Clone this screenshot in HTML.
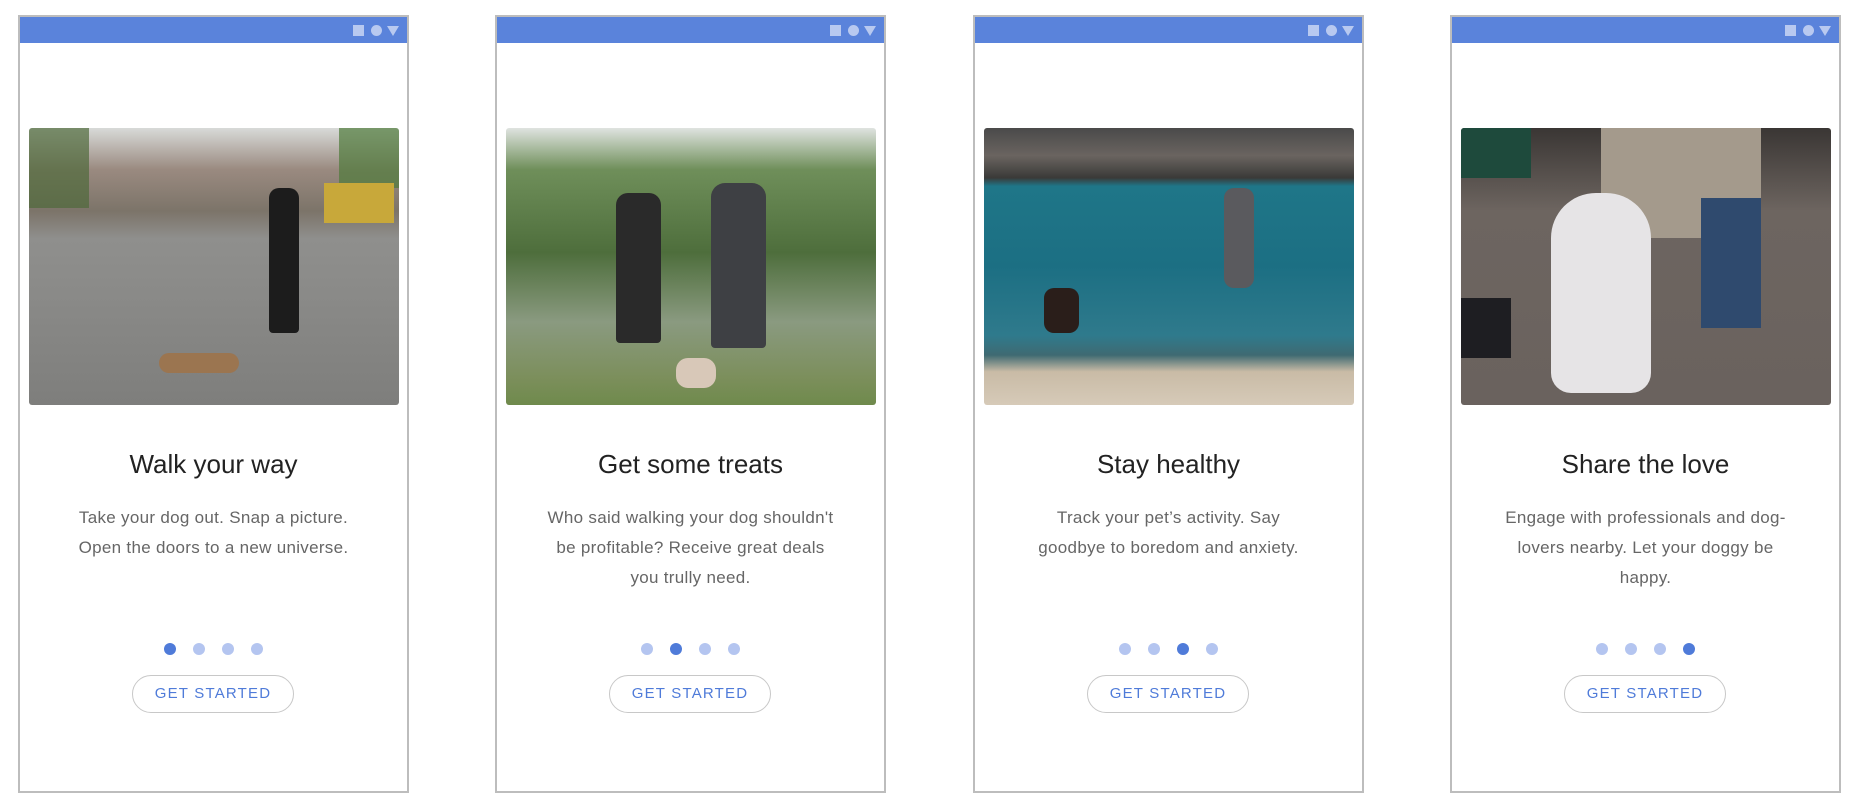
<!DOCTYPE html>
<html><head><meta charset="utf-8"><style>
*{margin:0;padding:0;box-sizing:border-box}
body{width:1866px;height:812px;background:#fff;position:relative;overflow:hidden;font-family:"Liberation Sans",sans-serif}
.f{position:absolute;top:15px;width:391px;height:778px;border:2px solid #bdbdbd;background:#fff}
.sb{position:absolute;left:0;top:0;right:0;height:26px;background:#5a83db}
.ic{position:absolute;top:8px}
.img{position:absolute;left:9px;top:111px;width:370px;height:277px;border-radius:3px;overflow:hidden}
.t{position:absolute;left:0;right:0;top:432px;text-align:center;font-size:26px;color:#222}
.d{position:absolute;left:10px;right:10px;top:486px;text-align:center;font-size:17px;line-height:30px;color:#666;letter-spacing:.3px;white-space:nowrap}
.dots{position:absolute;left:0;right:0;top:626px;text-align:center;font-size:0}
.dots i{display:inline-block;width:12px;height:12px;border-radius:50%;background:#b4c5f0;margin:0 8.5px}
.dots i.a{background:#4f7bd9}
.btn{position:absolute;left:112px;top:658px;width:162px;height:38px;border:1px solid #c8c8c8;border-radius:19px;text-align:center;line-height:36px;font-size:15px;letter-spacing:1.2px;color:#4f7bd9}
</style></head><body>

<div class="f" style="left:18px">
<div class="sb"><div class="ic" style="left:333px;width:11px;height:11px;background:#b8c9f0"></div><div class="ic" style="left:351px;width:11px;height:11px;border-radius:50%;background:#b8c9f0"></div><div class="ic" style="left:367px;width:0;height:0;border-left:6px solid transparent;border-right:6px solid transparent;border-top:10px solid #b8c9f0;top:9px"></div></div>
<div class="img" style="background:linear-gradient(180deg,#d8dad8 0%,#9a8a80 15%,#7c7469 30%,#8f8f8d 40%,#8a8a88 60%,#7e7e7c 100%)">
<div style="position:absolute;left:0;top:0;width:60px;height:80px;background:#4f6a3a;opacity:.7"></div>
<div style="position:absolute;right:0;top:0;width:60px;height:60px;background:#4f7a3a;opacity:.7"></div>
<div style="position:absolute;right:5px;top:55px;width:70px;height:40px;background:#c8a83a"></div>
<div style="position:absolute;left:240px;top:60px;width:30px;height:145px;background:#1c1c1c;border-radius:10px 10px 4px 4px"></div>
<div style="position:absolute;left:130px;top:225px;width:80px;height:20px;background:#9b7550;border-radius:10px"></div>
</div>
<div class="t">Walk your way</div>
<div class="d">Take your dog out. Snap a picture.<br>Open the doors to a new universe.</div>
<div class="dots"><i class="a"></i><i></i><i></i><i></i></div>
<div class="btn">GET STARTED</div>
</div>

<div class="f" style="left:495px">
<div class="sb"><div class="ic" style="left:333px;width:11px;height:11px;background:#b8c9f0"></div><div class="ic" style="left:351px;width:11px;height:11px;border-radius:50%;background:#b8c9f0"></div><div class="ic" style="left:367px;width:0;height:0;border-left:6px solid transparent;border-right:6px solid transparent;border-top:10px solid #b8c9f0;top:9px"></div></div>
<div class="img" style="background:linear-gradient(180deg,#dfe3e0 0%,#6f8f5a 15%,#4e6e3c 45%,#8a9a80 70%,#7c8f5c 90%,#6f8a4c 100%)">
<div style="position:absolute;left:110px;top:65px;width:45px;height:150px;background:#2a2a2a;border-radius:12px 12px 4px 4px"></div>
<div style="position:absolute;left:205px;top:55px;width:55px;height:165px;background:#3e4044;border-radius:14px 14px 4px 4px"></div>
<div style="position:absolute;left:170px;top:230px;width:40px;height:30px;background:#d8c8b8;border-radius:12px"></div>
</div>
<div class="t">Get some treats</div>
<div class="d">Who said walking your dog shouldn't<br>be profitable? Receive great deals<br>you trully need.</div>
<div class="dots"><i></i><i class="a"></i><i></i><i></i></div>
<div class="btn">GET STARTED</div>
</div>

<div class="f" style="left:973px">
<div class="sb"><div class="ic" style="left:333px;width:11px;height:11px;background:#b8c9f0"></div><div class="ic" style="left:351px;width:11px;height:11px;border-radius:50%;background:#b8c9f0"></div><div class="ic" style="left:367px;width:0;height:0;border-left:6px solid transparent;border-right:6px solid transparent;border-top:10px solid #b8c9f0;top:9px"></div></div>
<div class="img" style="background:linear-gradient(180deg,#4a4a4a 0%,#6a6460 10%,#3a3a38 18%,#1f7688 21%,#1c6f83 50%,#2f7a8c 75%,#3f6a72 82%,#c9bba6 88%,#d6cab8 100%)">
<div style="position:absolute;left:240px;top:60px;width:30px;height:100px;background:#5a5a5e;border-radius:10px"></div>
<div style="position:absolute;left:60px;top:160px;width:35px;height:45px;background:#2a1e1a;border-radius:10px"></div>
</div>
<div class="t">Stay healthy</div>
<div class="d">Track your pet’s activity. Say<br>goodbye to boredom and anxiety.</div>
<div class="dots"><i></i><i></i><i class="a"></i><i></i></div>
<div class="btn">GET STARTED</div>
</div>

<div class="f" style="left:1450px">
<div class="sb"><div class="ic" style="left:333px;width:11px;height:11px;background:#b8c9f0"></div><div class="ic" style="left:351px;width:11px;height:11px;border-radius:50%;background:#b8c9f0"></div><div class="ic" style="left:367px;width:0;height:0;border-left:6px solid transparent;border-right:6px solid transparent;border-top:10px solid #b8c9f0;top:9px"></div></div>
<div class="img" style="background:linear-gradient(180deg,#3a3634 0%,#6d6560 30%,#6a625e 100%)">
<div style="position:absolute;left:0;top:0;width:70px;height:50px;background:#1e4a3c"></div>
<div style="position:absolute;left:140px;top:0;width:160px;height:110px;background:#a49a8c;border-radius:0 0 30px 30px"></div>
<div style="position:absolute;left:240px;top:70px;width:60px;height:130px;background:#2f4a6e"></div>
<div style="position:absolute;left:90px;top:65px;width:100px;height:200px;background:#e6e4e6;border-radius:45px 45px 20px 20px"></div>
<div style="position:absolute;left:0;top:170px;width:50px;height:60px;background:#1e1e22"></div>
</div>
<div class="t">Share the love</div>
<div class="d">Engage with professionals and dog-<br>lovers nearby. Let your doggy be<br>happy.</div>
<div class="dots"><i></i><i></i><i></i><i class="a"></i></div>
<div class="btn">GET STARTED</div>
</div>

</body></html>
